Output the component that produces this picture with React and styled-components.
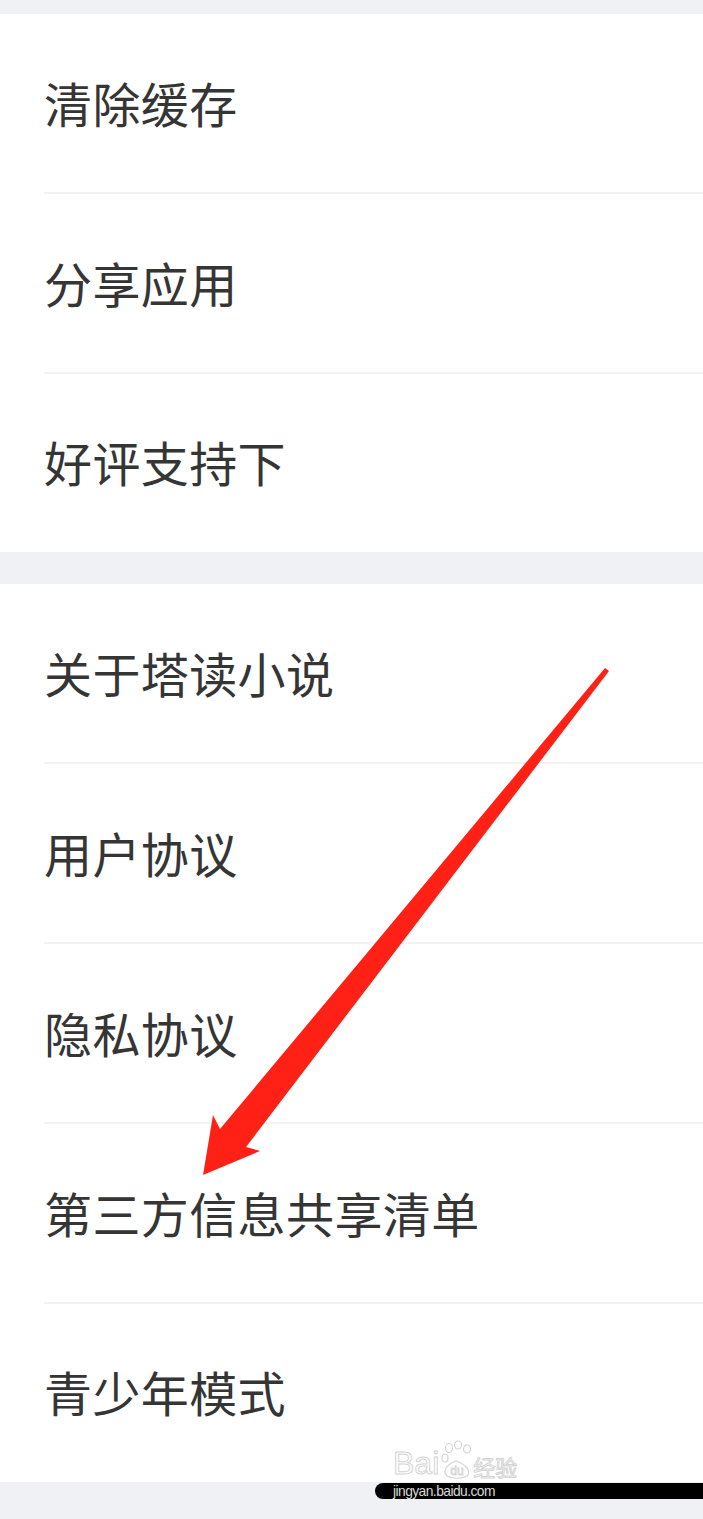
import React from "react";
import styled, { createGlobalStyle } from "styled-components";

const GlobalStyle = createGlobalStyle`
  html, body {
    margin: 0;
    padding: 0;
    background: #eff1f4;
  }
  body {
    font-family: "Noto Sans CJK SC", "Noto Sans", sans-serif;
  }
`;

const Page = styled.div`
  position: relative;
  width: 703px;
  height: 1519px;
  overflow: hidden;
  background: #eff1f4;
  padding-top: 14px;
  box-sizing: border-box;
  display: flex;
  flex-direction: column;
  gap: 32px;
`;

const Section = styled.div`
  background: #ffffff;
  display: flex;
  flex-direction: column;
`;

const Row = styled.div`
  padding-left: 44px;
  height: ${(p) => (p.last ? "178px" : "180px")};
  box-sizing: border-box;
`;

const RowInner = styled.div`
  height: 100%;
  box-sizing: border-box;
  display: flex;
  align-items: center;
  border-bottom: ${(p) => (p.last ? "none" : "2px solid #f3f3f3")};
  padding-bottom: ${(p) => (p.last ? "4px" : "2px")};
`;

const Label = styled.span`
  font-family: "Noto Sans CJK SC", "Noto Sans", sans-serif;
  font-size: 48px;
  color: #353535;
  letter-spacing: 0.4px;
  line-height: 1;
`;

const Arrow = styled.svg`
  position: absolute;
  left: 0;
  top: 0;
  pointer-events: none;
`;

const Watermark = styled.div`
  position: absolute;
  left: 375px;
  top: 1483px;
  width: 340px;
  height: 16px;
  background: #000000;
  border-radius: 8px 0 0 8px;
`;

const WatermarkUrl = styled.span`
  position: absolute;
  left: 393px;
  top: 1482px;
  font-family: "Liberation Sans", Arial, sans-serif;
  font-size: 15px;
  line-height: 18px;
  letter-spacing: -0.6px;
  transform: scaleX(0.92);
  transform-origin: left center;
  color: #d8d8d8;
`;

const WatermarkLogo = styled.div`
  position: absolute;
  left: 393px;
  top: 1440px;
  display: flex;
  align-items: flex-end;
  gap: 1px;
  color: transparent;
  -webkit-text-stroke: 1px #d4d4d4;
  font-family: "Liberation Sans", Arial, sans-serif;
  font-size: 32px;
  line-height: 34px;
`;

const LogoCn = styled.span`
  font-family: "Noto Sans CJK SC", sans-serif;
  font-size: 22px;
  line-height: 28px;
  margin-left: -2px;
`;

const groups = [
  ["清除缓存", "分享应用", "好评支持下"],
  ["关于塔读小说", "用户协议", "隐私协议", "第三方信息共享清单", "青少年模式"],
];

export default function App() {
  return (
    <>
      <GlobalStyle />
      <Page>
        {groups.map((items, gi) => (
          <Section key={gi}>
            {items.map((text, i) => {
              const last = i === items.length - 1;
              return (
                <Row key={text} last={last}>
                  <RowInner last={last}>
                    <Label>{text}</Label>
                  </RowInner>
                </Row>
              );
            })}
          </Section>
        ))}
        <Arrow width="703" height="1519" viewBox="0 0 703 1519">
          <polygon
            points="605,668 609,671 246,1147 260,1151 203,1175 213,1115 220,1129"
            fill="#ff2116"
          />
        </Arrow>
        <WatermarkLogo>
          <span>Bai</span>
          <svg width="34" height="40" viewBox="0 0 34 40">
            <g fill="none" stroke="#d4d4d4" strokeWidth="1.2">
              <ellipse cx="9" cy="8" rx="3.5" ry="4.5" />
              <ellipse cx="18" cy="5" rx="3.5" ry="4" />
              <ellipse cx="27" cy="9" rx="3.5" ry="4" />
              <ellipse cx="5" cy="18" rx="3" ry="4" />
              <path d="M7 36 C2 31 7 24 16 21 C25 24 32 31 27 36 C22 39 12 39 7 36 Z" />
            </g>
            <text
              x="17"
              y="35"
              textAnchor="middle"
              fontFamily="Liberation Sans, Arial, sans-serif"
              fontSize="12"
              fill="none"
              stroke="#d4d4d4"
              strokeWidth="0.8"
            >
              du
            </text>
          </svg>
          <LogoCn>经验</LogoCn>
        </WatermarkLogo>
        <Watermark />
        <WatermarkUrl>jingyan.baidu.com</WatermarkUrl>
      </Page>
    </>
  );
}
